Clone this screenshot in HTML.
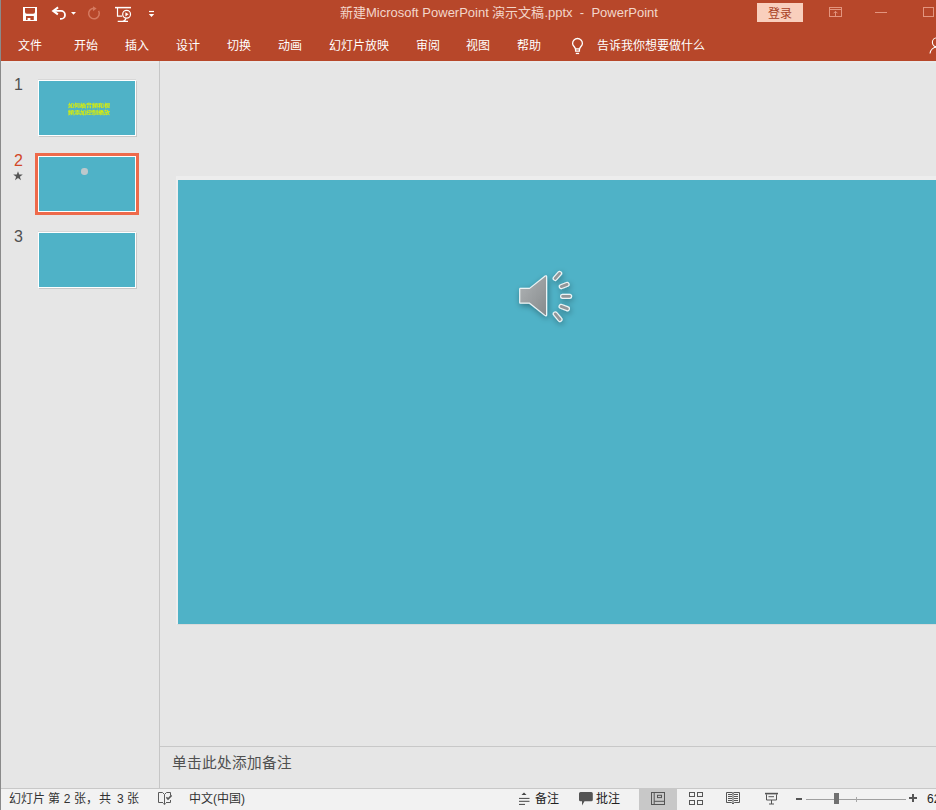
<!DOCTYPE html>
<html lang="zh-CN"><head><meta charset="utf-8">
<style>
*{margin:0;padding:0;box-sizing:border-box}
html,body{width:936px;height:810px;overflow:hidden;background:#e6e6e6;font-family:"Liberation Sans",sans-serif}
.a{position:absolute;white-space:nowrap}
svg{position:absolute;overflow:visible}
#top{position:absolute;left:0;top:0;width:936px;height:61px;background:#b7472a}
#lb{position:absolute;left:0;top:0;width:1px;height:810px;background:#8a8a8a}
.title{color:#f3d6cb;font-size:13px;top:2px}
.tab{color:#fff;font-size:12px;top:36px}
#vdiv{position:absolute;left:159px;top:61px;width:1px;height:727px;background:#c6c6c6}
.num{font-size:16px;color:#505050;line-height:1}
.thumb{position:absolute;background:#4fb2c7;border:1px solid #fff;box-shadow:1px 1px 0 #c8c8c8,0 -1px 0 #d8d8d8}
#slide{position:absolute;left:176px;top:176px;width:760px;height:449px;background:#4fb2c7;border-left:2px solid #eeeeee;border-top:4px solid #ededed;border-bottom:1px solid #dadada}
#notesline{position:absolute;left:160px;top:746px;width:776px;height:1px;background:#c8c8c8}
#status{position:absolute;left:1px;top:788px;width:935px;height:22px;background:#f2f2f2;border-top:1px solid #c8c8c8}
.st{font-size:12px;color:#333;top:791px;line-height:17px}
</style></head><body>
<div id="top"></div>
<div class="a" style="left:0;top:61px;width:936px;height:2px;background:#eaeaea"></div>
<div id="lb"></div>

<!-- QAT icons -->
<svg style="left:23px;top:7px" width="14" height="14" viewBox="0 0 14 14">
  <rect x="0" y="0" width="14" height="14" fill="#fff"/>
  <path d="M2 1H12V5Q12 6.8 10.2 6.8H3.8Q2 6.8 2 5Z" fill="#b7472a"/>
  <path d="M3 9.1H10.8V12.9H7.4V11H4.6V12.9H3Z" fill="#b7472a"/>
</svg>
<svg style="left:51px;top:6px" width="17" height="15" viewBox="0 0 17 15">
  <path d="M2.4 4.9H10A4 4 0 0 1 10 12.9H9" fill="none" stroke="#fff" stroke-width="1.8"/>
  <path d="M7.1 1.4L2.2 4.9L6.9 8.4" fill="none" stroke="#fff" stroke-width="2"/>
</svg>
<svg style="left:70px;top:11px" width="7" height="4" viewBox="0 0 7 4"><path d="M1 0.9H6L3.5 3.7Z" fill="#fff"/></svg>
<svg style="left:86px;top:7px" width="15" height="15" viewBox="0 0 15 15">
  <path d="M12.6 3.9A5.3 5.3 0 1 1 7.6 1.2" fill="none" stroke="#d57a60" stroke-width="1.5"/>
  <path d="M7 -0.8V4.2L10.6 1.6Z" fill="#d57a60"/>
</svg>
<svg style="left:114px;top:6px" width="18" height="17" viewBox="0 0 18 17">
  <path d="M1 1.6H17" stroke="#fff" stroke-width="1.5"/>
  <path d="M3.5 2V10.2H8.2" fill="none" stroke="#fff" stroke-width="1.2"/>
  <circle cx="12.6" cy="8.3" r="3.9" fill="none" stroke="#fff" stroke-width="1.2"/>
  <path d="M11.4 6.2V10.4L14.6 8.3Z" fill="#fff"/>
  <path d="M12 12.2Q11 15.1 8.5 15.4M3.7 15.4H14" fill="none" stroke="#fff" stroke-width="1.2"/>
</svg>
<svg style="left:148px;top:10px" width="7" height="8" viewBox="0 0 7 8">
  <path d="M1 1.5H6" stroke="#fff" stroke-width="1.2"/>
  <path d="M0.8 4H6.2L3.5 7Z" fill="#fff"/>
</svg>

<!-- title -->
<div class="a title" style="left:340px">新建Microsoft PowerPoint 演示文稿.pptx&nbsp;&nbsp;-&nbsp;&nbsp;PowerPoint</div>
<div class="a" style="left:757px;top:3px;width:46px;height:19px;background:#f9cfbd;color:#a83f24;font-size:12px;text-align:center;line-height:22px">登录</div>
<svg style="left:829px;top:7px" width="13" height="10" viewBox="0 0 13 10">
  <rect x="0.5" y="0.5" width="12" height="9" fill="none" stroke="#e3957f" stroke-width="1"/>
  <path d="M0.5 2.5H12.5M6.5 4.3V9.5M4.5 6.3L6.5 4.3L8.5 6.3" stroke="#e3957f" stroke-width="1" fill="none"/>
</svg>
<div class="a" style="left:875px;top:12px;width:12px;height:1px;background:#e3957f"></div>
<div class="a" style="left:923px;top:7px;width:11px;height:10px;border:1px solid #e3957f"></div>

<!-- tabs -->
<div class="a tab" style="left:18px">文件</div>
<div class="a tab" style="left:74px">开始</div>
<div class="a tab" style="left:125px">插入</div>
<div class="a tab" style="left:176px">设计</div>
<div class="a tab" style="left:227px">切换</div>
<div class="a tab" style="left:278px">动画</div>
<div class="a tab" style="left:329px">幻灯片放映</div>
<div class="a tab" style="left:416px">审阅</div>
<div class="a tab" style="left:466px">视图</div>
<div class="a tab" style="left:517px">帮助</div>
<svg style="left:571px;top:38px" width="13" height="17" viewBox="0 0 13 17">
  <path d="M4.4 10.9C4.2 8.8 1.6 7.9 1.6 5.4A4.9 4.9 0 0 1 11.4 5.4C11.4 7.9 8.8 8.8 8.6 10.9Z" fill="none" stroke="#fff" stroke-width="1.3"/>
  <path d="M4.6 11V13.2H8.4V11" fill="none" stroke="#fff" stroke-width="1.3"/>
  <rect x="4.8" y="14.8" width="3.3" height="1.3" fill="#fff"/>
</svg>
<div class="a tab" style="left:597px">告诉我你想要做什么</div>
<svg style="left:929px;top:37px" width="14" height="17" viewBox="0 0 14 17">
  <circle cx="8" cy="5.3" r="4.6" fill="none" stroke="#fff" stroke-width="1.1"/>
  <path d="M1 16.5A7.5 7.5 0 0 1 8 10" fill="none" stroke="#fff" stroke-width="1.1"/>
</svg>

<!-- left panel -->
<div id="vdiv"></div>
<div class="a num" style="left:14px;top:77px">1</div>
<div class="a num" style="left:14px;top:153px;color:#d24726">2</div>
<svg style="left:13px;top:171px" width="10" height="10" viewBox="0 0 10 10"><path d="M5 0.3L6.2 3.6H9.8L6.9 5.8L8 9.3L5 7.1L2 9.3L3.1 5.8L0.2 3.6H3.8Z" fill="#555"/></svg>
<div class="a num" style="left:14px;top:229px">3</div>

<div class="thumb" style="left:38px;top:80px;width:98px;height:56px"></div>
<div class="a" style="left:68px;top:103px;font-size:6px;color:#dff000;line-height:6px;font-weight:bold;transform:scale(1,0.75);transform-origin:0 0">如何插音频和视</div>
<div class="a" style="left:68px;top:110px;font-size:6px;color:#dff000;line-height:6px;font-weight:bold;transform:scale(1,0.75);transform-origin:0 0">频添加控制播放</div>
<div class="a" style="left:35px;top:153px;width:104px;height:62px;border:3px solid #ee6a4b;background:#fff"></div>
<div class="a" style="left:39px;top:157px;width:96px;height:54px;background:#4fb2c7"></div>
<div class="a" style="left:81px;top:168px;width:7px;height:7px;border-radius:45%;background:#bcc8cc"></div>
<div class="thumb" style="left:38px;top:232px;width:98px;height:56px"></div>

<!-- slide -->
<div id="slide"></div>
<svg style="left:510px;top:265px" width="70" height="65" viewBox="0 0 70 65">
  <defs>
    <linearGradient id="g" x1="0" y1="0" x2="1" y2="1">
      <stop offset="0" stop-color="#b0b4b6"/><stop offset="1" stop-color="#868a8c"/>
    </linearGradient>
    <filter id="sh" x="-50%" y="-50%" width="200%" height="200%">
      <feGaussianBlur in="SourceAlpha" stdDeviation="3"/>
      <feOffset dx="1" dy="2"/>
      <feComponentTransfer><feFuncA type="linear" slope="0.35"/></feComponentTransfer>
      <feMerge><feMergeNode/><feMergeNode in="SourceGraphic"/></feMerge>
    </filter>
  </defs>
  <g filter="url(#sh)">
    <path d="M10.3 23.4H19.6L35.2 11Q36.6 10.2 36.6 11.8V49.8Q36.6 51.5 35.2 50.6L19.6 38.2H10.3Q9.7 38.2 9.7 37.6V24Q9.7 23.4 10.3 23.4Z" fill="url(#g)" stroke="#eef3f4" stroke-width="1.2" stroke-linejoin="round"/>
    <g stroke-linecap="round" fill="none">
      <path d="M45.2 13.4L49.6 8.4M51.3 21.6L57.1 19.4M52.6 31.3H59.6M51.1 41.4L57.4 43.8M45.3 48.9L50 54.5" stroke="#eef3f4" stroke-width="5.2"/>
      <path d="M45.2 13.4L49.6 8.4M51.3 21.6L57.1 19.4M52.6 31.3H59.6M51.1 41.4L57.4 43.8M45.3 48.9L50 54.5" stroke="#92979a" stroke-width="2.8"/>
    </g>
  </g>
</svg>

<div id="notesline"></div>
<div class="a" style="left:172px;top:751px;font-size:14.67px;color:#505050">单击此处添加备注</div>

<!-- status bar -->
<div id="status"></div>
<div class="a st" style="left:9px">幻灯片 第 2 张，</div>
<div class="a st" style="left:99px">共</div>
<div class="a st" style="left:117px">3</div>
<div class="a st" style="left:127px">张</div>
<svg style="left:158px;top:792px" width="14" height="14" viewBox="0 0 14 14">
  <g fill="none" stroke="#5a5a5a" stroke-width="1">
  <path d="M5 10.5H0.5V0.5H4.5L6.5 2.5L8.5 0.5H12.5V3.6M12.5 8V10.5H8"/>
  <path d="M6.5 2.5V12.2"/>
  </g>
  <path d="M4.8 11.2H8.2L6.5 13Z" fill="#5a5a5a"/>
  <path d="M8.4 5.3L10 7L13.6 3.4" fill="none" stroke="#5a5a5a" stroke-width="1.6"/>
</svg>
<div class="a st" style="left:189px">中文(中国)</div>

<svg style="left:519px;top:792px" width="11" height="13" viewBox="0 0 11 13">
  <path d="M2.5 3L5 0.6L7.5 3Z" fill="#444"/>
  <path d="M0 6.4H10.5M0 9.3H10.5M0 12.4H6" stroke="#444" stroke-width="1"/>
</svg>
<div class="a st" style="left:535px;color:#222">备注</div>
<svg style="left:579px;top:792px" width="14" height="14" viewBox="0 0 14 14">
  <path d="M1.5 0H12.3Q13.8 0 13.8 1.5V7.8Q13.8 9.3 12.3 9.3H5.5L3 13.6V9.3H1.5Q0 9.3 0 7.8V1.5Q0 0 1.5 0Z" fill="#555"/>
</svg>
<div class="a st" style="left:596px;color:#222">批注</div>

<div class="a" style="left:639px;top:789px;width:38px;height:21px;background:#c8c8c8"></div>
<svg style="left:651px;top:792px" width="14" height="13" viewBox="0 0 14 13">
  <rect x="0.5" y="0.5" width="13" height="12" fill="none" stroke="#555" stroke-width="1"/>
  <path d="M3.2 0.5V12.5M3.2 9.3H13.5" stroke="#555" stroke-width="1"/>
  <rect x="6.5" y="3.3" width="4" height="2.3" fill="none" stroke="#555" stroke-width="1"/>
</svg>
<svg style="left:689px;top:792px" width="14" height="13" viewBox="0 0 14 13">
  <g fill="none" stroke="#555" stroke-width="1">
  <rect x="0.5" y="0.5" width="5" height="4"/><rect x="8.5" y="0.5" width="5" height="4"/>
  <rect x="0.5" y="8.5" width="5" height="4"/><rect x="8.5" y="8.5" width="5" height="4"/>
  </g>
</svg>
<svg style="left:726px;top:792px" width="14" height="13" viewBox="0 0 14 13">
  <g fill="none" stroke="#555" stroke-width="1">
  <path d="M0.5 0.5H6L7 1.3L8 0.5H13.5V10.5H8.5L7 12L5.5 10.5H0.5Z"/>
  <path d="M7 1V12M2 2.5H6M2 4.5H6M2 6.5H6M2 8.5H6M8 2.5H12M8 4.5H12M8 6.5H12M8 8.5H12"/>
  </g>
</svg>
<svg style="left:765px;top:792px" width="14" height="13" viewBox="0 0 14 13">
  <path d="M0 1.6H13" stroke="#555" stroke-width="1.6"/>
  <path d="M1.5 2.4V8H11.5V2.4" fill="none" stroke="#555" stroke-width="1"/>
  <path d="M3.5 4.7H9M6.5 8V12M4 12H9" stroke="#555" stroke-width="1"/>
</svg>
<div class="a" style="left:796px;top:798px;width:6px;height:2px;background:#555"></div>
<div class="a" style="left:806px;top:799px;width:100px;height:1px;background:#a0a0a0"></div>
<div class="a" style="left:856px;top:797px;width:1px;height:5px;background:#a8a8a8"></div>
<div class="a" style="left:834px;top:793px;width:5px;height:11px;background:#707070"></div>
<div class="a" style="left:909px;top:797px;width:8px;height:2px;background:#555"></div>
<div class="a" style="left:912px;top:794px;width:2px;height:8px;background:#555"></div>
<div class="a st" style="left:927px;color:#222">62%</div>
</body></html>
